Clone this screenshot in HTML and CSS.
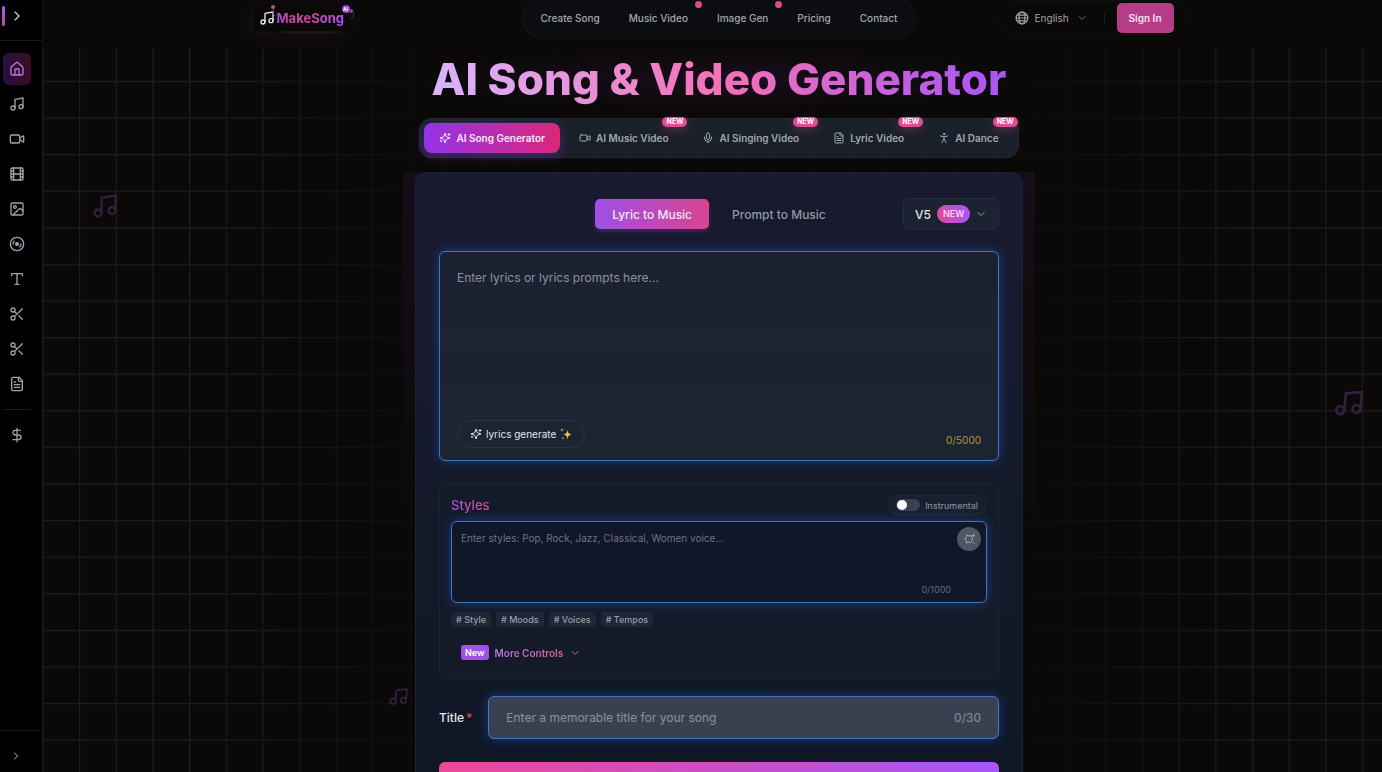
FILE: index.html
```html
<!DOCTYPE html>
<html lang="en">
<head>
<meta charset="utf-8">
<meta name="viewport" content="width=device-width, initial-scale=1">
<title>MakeSong AI - AI Song &amp; Video Generator</title>
<link rel="stylesheet" href="styles.css">
</head>
<body>

<!-- icon set -->
<svg class="sprite" aria-hidden="true">
  <symbol id="i-right" viewBox="0 0 24 24"><path d="m9 18 6-6-6-6"/></symbol>
  <symbol id="i-down" viewBox="0 0 24 24"><path d="m6 9 6 6 6-6"/></symbol>
  <symbol id="i-home" viewBox="0 0 24 24"><path d="M15 21v-8a1 1 0 0 0-1-1h-4a1 1 0 0 0-1 1v8"/><path d="M3 10a2 2 0 0 1 .7-1.5l7-6a2 2 0 0 1 2.6 0l7 6A2 2 0 0 1 21 10v9a2 2 0 0 1-2 2H5a2 2 0 0 1-2-2z"/></symbol>
  <symbol id="i-music" viewBox="0 0 24 24"><path d="M9 18V5l12-2v13"/><circle cx="6" cy="18" r="3"/><circle cx="18" cy="16" r="3"/></symbol>
  <symbol id="i-video" viewBox="0 0 24 24"><path d="m16 13 5.2 3.5a.5.5 0 0 0 .8-.4V7.900a.5.5 0 0 0-.8-.4L16 10.500"/><rect x="2" y="6" width="14" height="12" rx="2"/></symbol>
  <symbol id="i-film" viewBox="0 0 24 24"><rect x="3" y="3" width="18" height="18" rx="2"/><path d="M7 3v18M3 7.500h4M3 12h18M3 16.500h4M17 3v18M17 7.500h4M17 16.500h4"/></symbol>
  <symbol id="i-image" viewBox="0 0 24 24"><rect x="3" y="3" width="18" height="18" rx="2"/><circle cx="9" cy="9" r="2"/><path d="m21 15-3.100-3.100a2 2 0 0 0-2.800 0L6 21"/></symbol>
  <symbol id="i-disc" viewBox="0 0 24 24"><circle cx="12" cy="12" r="10"/><circle cx="12" cy="12" r="2" fill="currentColor"/><path d="M6 12c0-1.700.7-3.200 1.800-4.200M18 12c0 1.700-.7 3.200-1.800 4.200"/></symbol>
  <symbol id="i-type" viewBox="0 0 24 24"><path d="M4 7V4h16v3M9 20h6M12 4v16"/></symbol>
  <symbol id="i-cut" viewBox="0 0 24 24"><circle cx="6" cy="6" r="3"/><path d="M8.100 8.100 12 12M20 4 8.100 15.900M14.800 14.800 20 20"/><circle cx="6" cy="18" r="3"/></symbol>
  <symbol id="i-file" viewBox="0 0 24 24"><path d="M15 2H6a2 2 0 0 0-2 2v16a2 2 0 0 0 2 2h12a2 2 0 0 0 2-2V7z"/><path d="M14 2v4a2 2 0 0 0 2 2h4M8 9h2M8 13h8M8 17h8"/></symbol>
  <symbol id="i-dollar" viewBox="0 0 24 24"><path d="M12 2v20M17 5H9.500a3.500 3.500 0 0 0 0 7h5a3.500 3.500 0 0 1 0 7H6"/></symbol>
  <symbol id="i-globe" viewBox="0 0 24 24"><circle cx="12" cy="12" r="10"/><ellipse cx="12" cy="12" rx="5" ry="10"/><path d="M2 12h20M4 7h16M4 17h16"/></symbol>
  <symbol id="i-spark" viewBox="0 0 24 24"><path d="M9.937 15.500A2 2 0 0 0 8.500 14.063l-6.135-1.582a.5.5 0 0 1 0-.962L8.500 9.936A2 2 0 0 0 9.937 8.500l1.582-6.135a.5.5 0 0 1 .963 0L14.063 8.500A2 2 0 0 0 15.500 9.937l6.135 1.581a.5.5 0 0 1 0 .964L15.500 14.063a2 2 0 0 0-1.437 1.437l-1.582 6.135a.5.5 0 0 1-.963 0z"/><path d="M20 3v4M22 5h-4M4 17v2M5 18H3"/></symbol>
  <symbol id="i-mic" viewBox="0 0 24 24"><rect x="9" y="2" width="6" height="13" rx="3"/><path d="M19 10v2a7 7 0 0 1-14 0v-2M12 19v3"/></symbol>
  <symbol id="i-dance" viewBox="0 0 24 24"><circle cx="12" cy="4" r="1.500"/><path d="M5 8c4 1.500 10 1.500 14 0M12 9v5M8 21l4-7 4 7"/></symbol>
  <symbol id="i-wand" viewBox="0 0 24 24"><path d="M16 5l-4 1-5-2v5l-4 3 4 3v5l5-2 3 1M16 5l1 4 3 3-3 2M17 16l5 5M21 3v4M19 5h4"/></symbol>
</svg>

<div class="app">

  <aside class="sidebar">
    <div class="side-top">
      <span class="side-mark"></span>
      <button class="side-btn" aria-label="Expand"><svg class="icon s16"><use href="#i-right"/></svg></button>
    </div>
    <nav class="side-nav" aria-label="Tools">
      <a class="side-link active" href="#home" aria-label="Home"><svg class="icon s16"><use href="#i-home"/></svg></a>
      <a class="side-link" href="#music" aria-label="Music"><svg class="icon s16"><use href="#i-music"/></svg></a>
      <a class="side-link" href="#video" aria-label="Video"><svg class="icon s16"><use href="#i-video"/></svg></a>
      <a class="side-link" href="#film" aria-label="Film"><svg class="icon s16"><use href="#i-film"/></svg></a>
      <a class="side-link" href="#image" aria-label="Image"><svg class="icon s16"><use href="#i-image"/></svg></a>
      <a class="side-link" href="#cover" aria-label="Cover"><svg class="icon s16"><use href="#i-disc"/></svg></a>
      <a class="side-link" href="#text" aria-label="Text"><svg class="icon s16"><use href="#i-type"/></svg></a>
      <a class="side-link" href="#split" aria-label="Splitter"><svg class="icon s16"><use href="#i-cut"/></svg></a>
      <a class="side-link" href="#trim" aria-label="Trimmer"><svg class="icon s16"><use href="#i-cut"/></svg></a>
      <a class="side-link" href="#lyrics" aria-label="Lyrics"><svg class="icon s16"><use href="#i-file"/></svg></a>
      <hr class="side-rule">
      <a class="side-link" href="#pricing" aria-label="Pricing"><svg class="icon s16"><use href="#i-dollar"/></svg></a>
    </nav>
    <div class="side-bottom">
      <button class="side-btn" aria-label="More"><svg class="icon s12"><use href="#i-right"/></svg></button>
    </div>
  </aside>

  <div class="page">
    <!-- background grid and floating notes -->
    <svg class="grid-bg" aria-hidden="true">
      <defs>
        <pattern id="grid" x="-.6" y="7.600" width="36.650" height="36.600" patternUnits="userSpaceOnUse">
          <path d="M0 .5H36.650M.5 0V36.600" stroke="#1d1d1c" stroke-width="1.500" fill="none"/>
        </pattern>
      </defs>
      <rect width="100%" height="100%" fill="url(#grid)"/>
    </svg>
    <svg class="icon note note-a" aria-hidden="true"><use href="#i-music"/></svg>
    <svg class="icon note note-b" aria-hidden="true"><use href="#i-music"/></svg>
    <svg class="icon note note-c" aria-hidden="true"><use href="#i-music"/></svg>

    <header class="header">
      <div class="header-in">
        <a class="logo" href="#top">
          <svg class="icon s16"><use href="#i-music"/></svg>
          <span class="logo-text">MakeSong</span>
          <span class="logo-ai">AI</span>
          <svg class="logo-art" viewBox="0 0 102 32" aria-hidden="true">
            <path d="M21 4c2 4-2 6 2 9" stroke="#8d4b70" fill="none"/>
            <circle cx="21" cy="4" r="2" fill="#b55b7b"/>
            <path d="M99 8c4 1 3 5 0 8" stroke="#4a3868" fill="none"/>
            <circle cx="99" cy="8" r="2" fill="#6f4c99"/>
            <path d="M30 29h52" stroke="#3d1a30"/>
          </svg>
        </a>
        <nav class="menu" aria-label="Main">
          <a href="#create">Create Song</a>
          <a class="dot" href="#mv">Music Video</a>
          <a class="dot" href="#gen">Image Gen</a>
          <a href="#price">Pricing</a>
          <a href="#contact">Contact</a>
        </nav>
        <div class="account">
          <div class="lang">
            <svg class="icon s14"><use href="#i-globe"/></svg>
            <select class="lang-select" aria-label="Language"><option>English</option></select>
            <svg class="icon s12 arrow"><use href="#i-down"/></svg>
          </div>
          <span class="bar"></span>
          <button class="signin">Sign In</button>
        </div>
      </div>
    </header>

    <main class="main">
      <h1 class="title"><span>AI Song &amp; Video Generator</span></h1>

      <div class="tabs">
        <button class="tab active"><svg class="icon s12"><use href="#i-spark"/></svg>AI Song Generator</button>
        <button class="tab"><svg class="icon s12"><use href="#i-video"/></svg>AI Music Video<span class="new">NEW</span></button>
        <button class="tab"><svg class="icon s12"><use href="#i-mic"/></svg>AI Singing Video<span class="new">NEW</span></button>
        <button class="tab"><svg class="icon s12"><use href="#i-file"/></svg>Lyric Video<span class="new">NEW</span></button>
        <button class="tab"><svg class="icon s12"><use href="#i-dance"/></svg>AI Dance<span class="new">NEW</span></button>
      </div>

      <div class="glow">
      <form class="card">
        <div class="mode-row">
          <div class="modes">
            <button type="button" class="mode active">Lyric to Music</button>
            <button type="button" class="mode">Prompt to Music</button>
          </div>
          <div class="version">
            <select class="version-select" aria-label="Model version"><option>V5</option></select>
            <span class="version-new">NEW</span>
            <svg class="icon s12 arrow"><use href="#i-down"/></svg>
          </div>
        </div>

        <div class="lyrics">
          <textarea class="field lyrics-input" aria-label="Lyrics" placeholder="Enter lyrics or lyrics prompts here..."></textarea>
          <div class="lyrics-foot">
            <button type="button" class="generate">
              <svg class="icon s12"><use href="#i-spark"/></svg>
              lyrics generate
              <svg class="stars" viewBox="0 0 12 12" aria-hidden="true"><path d="M7.500 1.500C8 5 8.500 5.800 12 6.500 8.500 7.200 8 8 7.500 11.500 7 8 6.500 7.200 3 6.500 6.500 5.800 7 5 7.500 1.500z" fill="#f6c344"/><path d="M2 0c.2 1.400.6 1.800 2 2-1.400.2-1.800.6-2 2C1.800 2.600 1.400 2.200 0 2 1.400 1.800 1.800 1.400 2 0zM3 8.500c.2 1 .5 1.300 1.500 1.500-1 .2-1.300.5-1.500 1.500-.2-1-.5-1.300-1.500-1.500 1-.2 1.300-.5 1.500-1.500z" fill="#e09a3a"/></svg>
            </button>
            <span class="count gold">0/5000</span>
          </div>
        </div>

        <section class="styles">
          <div class="styles-head">
            <label class="styles-label" for="styles">Styles</label>
            <label class="instrumental"><input type="checkbox" class="switch">Instrumental</label>
          </div>
          <div class="styles-box">
            <textarea class="field styles-input" id="styles" placeholder="Enter styles: Pop, Rock, Jazz, Classical, Women voice..."></textarea>
            <button type="button" class="magic" aria-label="Random styles"><svg class="icon s12"><use href="#i-wand"/></svg></button>
            <span class="count small">0/1000</span>
          </div>
          <div class="tags">
            <button type="button" class="tag"># Style</button>
            <button type="button" class="tag"># Moods</button>
            <button type="button" class="tag"># Voices</button>
            <button type="button" class="tag"># Tempos</button>
          </div>
          <button type="button" class="more">
            <span class="more-new">New</span>
            <span class="more-text">More Controls</span>
            <svg class="icon s12"><use href="#i-down"/></svg>
          </button>
        </section>

        <div class="title-row">
          <label class="title-label" for="song-title">Title<span class="req">*</span></label>
          <div class="title-box">
            <input class="field title-input" id="song-title" type="text" placeholder="Enter a memorable title for your song">
            <span class="count title-count">0/30</span>
          </div>
        </div>

        <button type="submit" class="submit" aria-label="Create"></button>
      </form>
      </div>
    </main>
  </div>
</div>

</body>
</html>
```
FILE: styles.css
```css
* {
  box-sizing: border-box;
}

body {
  margin: 0;
  background: #0a0908;
  color: #e5e7eb;
  font-family: Inter, "Liberation Sans", sans-serif;
  font-size: 12px;
}

button, input, select, textarea {
  font-family: inherit;
  color: inherit;
  margin: 0;
}

button {
  border: 0;
  padding: 0;
  background: none;
  cursor: pointer;
}

a {
  color: inherit;
  text-decoration: none;
}

.sprite {
  position: absolute;
  width: 0;
  height: 0;
}

.icon {
  fill: none;
  stroke: currentColor;
  stroke-width: 2;
  stroke-linecap: round;
  stroke-linejoin: round;
  flex: none;
}
.s12 { width: 12px; height: 12px; }
.s14 { width: 14px; height: 14px; }
.s16 { width: 16px; height: 16px; }

.app {
  display: flex;
  height: 100vh;
  overflow: hidden;
}

/* sidebar */
.sidebar {
  display: flex;
  flex-direction: column;
  width: 43px;
  flex: none;
  background: #000;
  border-right: 1px solid #15171d;
  color: #9ca3af;
}

.side-top {
  display: flex;
  align-items: center;
  gap: 4px;
  height: 41px;
  padding: 0 2px 9px;
  border-bottom: 1px solid #15171d;
}

.side-mark {
  width: 3px;
  height: 20px;
  border-radius: 2px;
  background: linear-gradient(#a855f7, #b04cae);
}

.side-btn {
  display: flex;
  color: #c3c5ca;
}

.side-nav {
  display: flex;
  flex-direction: column;
  gap: 3px;
  padding: 12px 12px 0 3px;
  flex: 1;
}

.side-link {
  display: flex;
  align-items: center;
  justify-content: center;
  width: 28px;
  height: 32px;
  border-radius: 6px;
}
.side-link.active {
  color: #b877d8;
  background: linear-gradient(90deg, #2a0f40, #3a0e25);
}

.side-rule {
  width: 28px;
  margin: 6px 0;
  border: 0;
  border-top: 1px solid #1b1d22;
}

.side-bottom {
  height: 42px;
  display: flex;
  align-items: center;
  padding: 8px 0 0 10px;
  border-top: 1px solid #15171d;
}

/* page and its backdrop */
.page {
  position: relative;
  flex: 1;
  min-width: 0;
  overflow: hidden;
}

.grid-bg {
  position: absolute;
  inset: 0;
  width: 100%;
  height: 100%;
  -webkit-mask-image: linear-gradient(90deg, #000 15%, rgba(0,0,0,.2) 28%, rgba(0,0,0,.1) 50%, rgba(0,0,0,.2) 74%, #000 90%);
  mask-image: linear-gradient(90deg, #000 15%, rgba(0,0,0,.2) 28%, rgba(0,0,0,.1) 50%, rgba(0,0,0,.2) 74%, #000 90%);
}

.note {
  position: absolute;
  color: #31203b;
}
.note-a { left: 48px; top: 192px; width: 28px; height: 28px; }
.note-b { left: 345px; top: 686px; width: 21px; height: 21px; transform: rotate(4deg); }
.note-c { right: 17px; top: 387px; width: 32px; height: 32px; transform: rotate(5deg); }

/* header */
.header {
  position: relative;
  z-index: 2;
  height: 48px;
  padding: 0 0 12px 13px;
  background: #0a0908;
}

.header-in {
  display: grid;
  grid-template-columns: 1fr auto 1fr;
  grid-template-rows: 100%;
  align-items: center;
  height: 100%;
  max-width: 935px;
  margin: 0 auto;
}

.logo {
  position: relative;
  display: flex;
  align-items: center;
  justify-self: start;
  gap: 2px;
  width: 102px;
  height: 30px;
  padding-left: 6px;
  border: 1px solid #130e12;
  border-radius: 6px;
  box-shadow: -4px 4px 18px rgba(168,85,247,.08);
  color: #e8e8e8;
}

.logo-text {
  font-size: 13px;
  font-weight: 700;
  background: linear-gradient(90deg, #b04cc8, #d6479b 50%, #a855f7);
  -webkit-background-clip: text;
  background-clip: text;
  color: transparent;
}

.logo-ai {
  position: absolute;
  right: 3px;
  top: 1px;
  width: 8px;
  height: 8px;
  border-radius: 4px;
  background: #a63fd0;
  color: #fff;
  font-size: 5px;
  font-weight: 700;
  line-height: 8px;
  text-align: center;
}

.logo-art {
  position: absolute;
  inset: -1px 0 0 -1px;
  width: 102px;
  height: 32px;
}

.menu {
  display: flex;
  align-items: center;
  gap: 29px;
  height: 41px;
  padding: 0 18px;
  border: 1px solid #13161b;
  border-radius: 21px;
  background: #0b0d11;
  color: #a3a6ad;
  font-size: 10px;
  font-weight: 500;
}

.dot {
  position: relative;
}
.dot::after {
  content: "";
  position: absolute;
  right: -14px;
  top: -11px;
  width: 7px;
  height: 7px;
  border-radius: 50%;
  background: #dc4a94;
}

.account {
  display: flex;
  align-items: center;
  justify-self: end;
  height: 36px;
  padding: 0 12px 0 15px;
  border: 1px solid #11100f;
  border-radius: 18px;
  color: #a3a3a6;
}

.lang {
  display: flex;
  align-items: center;
}

.lang-select {
  appearance: none;
  width: 57px;
  margin-right: -10px;
  padding: 0 0 0 6px;
  border: 0;
  background: none;
  font-size: 10px;
}

.arrow {
  pointer-events: none;
}
.lang .arrow {
  color: #6b6b70;
}

.bar {
  width: 1px;
  height: 12px;
  margin: 0 12px 0 16px;
  background: #1c1b1b;
}

.signin {
  height: 30px;
  padding: 0 12px;
  border-radius: 5px;
  background: #b63c88;
  color: #fbe3f1;
  font-size: 10px;
  font-weight: 600;
}

/* main column */
.main {
  position: relative;
  display: flex;
  flex-direction: column;
  align-items: center;
  padding-left: 13px;
}

.title {
  margin: 0;
  padding: 0 12px;
  font-size: 44px;
  font-weight: 800;
  line-height: 62px;
  white-space: nowrap;
  background: radial-gradient(closest-side, #1a0d1c, rgba(26,13,28,0));
}
.title span {
  background: linear-gradient(90deg, #d8b4fe, #f472b6 50%, #a855f7);
  -webkit-background-clip: text;
  background-clip: text;
  color: transparent;
}

.tabs {
  display: flex;
  gap: 4px;
  margin-top: 8px;
  padding: 4px;
  border: 1px solid #222831;
  border-radius: 12px;
  background: #1a2029;
}

.tab {
  position: relative;
  display: flex;
  align-items: center;
  gap: 5px;
  height: 30px;
  padding: 0 15px;
  border-radius: 8px;
  color: #a0a6b0;
  font-size: 10px;
  font-weight: 600;
  white-space: nowrap;
}
.tab.active {
  background: linear-gradient(90deg, #9333ea, #db2777);
  box-shadow: 0 3px 12px rgba(147,51,234,.4);
  color: #fbe9fb;
}

.new {
  position: absolute;
  right: -4px;
  top: -6px;
  width: 25px;
  height: 10px;
  border-radius: 5px;
  background: #e04c96;
  box-shadow: 0 3px 8px rgba(236,72,153,.3);
  color: #fff;
  font-size: 7px;
  font-weight: 700;
  line-height: 10px;
  text-align: center;
}

.glow {
  width: 100%;
  max-width: 632px;
  margin-top: 14px;
  padding: 0 12px;
  background: linear-gradient(#150d18, rgba(21,13,24,0) 360px);
}

.card {
  padding: 24px 23px 0;
  border: 1px solid #1b2034;
  border-bottom: 0;
  border-radius: 12px 12px 0 0;
  background: linear-gradient(#1a1a30, #141a2b 40%, #0f1725);
}

.mode-row {
  display: grid;
  grid-template-columns: 1fr auto 1fr;
  align-items: center;
}

.modes {
  grid-column: 2;
  display: flex;
  gap: 6px;
  padding: 2px;
  border-radius: 6px;
  background: #161a2c;
}

.mode {
  height: 30px;
  padding: 0 17px;
  border-radius: 5px;
  color: #9299a6;
  font-size: 12px;
  font-weight: 500;
}
.mode.active {
  background: linear-gradient(90deg, #9f50e6, #d8448f);
  box-shadow: 0 2px 5px rgba(168,85,247,.3);
  color: #f8e6f8;
}

.version {
  position: relative;
  display: flex;
  align-items: center;
  gap: 5px;
  justify-self: end;
  width: 96px;
  height: 32px;
  padding-left: 33px;
  border: 1px solid #282d3a;
  border-radius: 6px;
  background: #1b2232;
}

.version-select {
  appearance: none;
  position: absolute;
  inset: 0;
  width: 100%;
  padding: 0 11px;
  border: 0;
  background: none;
  font-size: 12px;
  font-weight: 500;
}

.version-new {
  position: relative;
  padding: 0 6px;
  border-radius: 9px;
  background: linear-gradient(90deg, #e04a9a, #a855f7);
  color: #fbe3f8;
  font-size: 9px;
  font-weight: 500;
  line-height: 18px;
  pointer-events: none;
}

.version .arrow {
  position: relative;
  color: #9ca3af;
}

/* text fields share the blue outline */
.field {
  display: block;
  width: 100%;
  border: 1px solid #4478b8;
  border-radius: 6px;
  outline: 0;
  resize: none;
  box-shadow: 0 0 12px rgba(37,99,235,.45);
}
.field::placeholder {
  color: #8b919e;
  opacity: 1;
}

.lyrics {
  position: relative;
  margin-top: 20px;
}

.lyrics-input {
  height: 210px;
  padding: 16px 17px;
  background: linear-gradient(#1c2132, #1b2531);
  font-size: 12px;
  line-height: 20px;
}

.lyrics-foot {
  position: absolute;
  left: 18px;
  right: 18px;
  bottom: 13px;
  display: flex;
  justify-content: space-between;
  align-items: flex-end;
}

.generate {
  display: flex;
  align-items: center;
  gap: 4px;
  height: 28px;
  padding: 0 12px;
  border: 1px solid #29323e;
  border-radius: 14px;
  color: #e2e5ea;
  font-size: 10px;
}

.stars {
  width: 12px;
  height: 12px;
}

.count {
  color: #868d9a;
}
.gold {
  color: #b8923a;
  font-size: 10px;
  line-height: 16px;
}

.styles {
  margin-top: 22px;
  padding: 11px 11px 18px;
  border: 1px solid #1d2331;
  border-radius: 8px;
  background: #141a28;
}

.styles-head {
  display: flex;
  align-items: center;
  justify-content: space-between;
}

.styles-label {
  background: linear-gradient(90deg, #a855d8, #dc4a94);
  -webkit-background-clip: text;
  background-clip: text;
  color: transparent;
  font-size: 13px;
  font-weight: 500;
}

.instrumental {
  display: flex;
  align-items: center;
  gap: 5px;
  height: 20px;
  padding: 0 8px;
  border: 1px solid #202836;
  border-radius: 10px;
  background: #182030;
  color: #9097a3;
  font-size: 9px;
}

.switch {
  appearance: none;
  width: 24px;
  height: 12px;
  border-radius: 6px;
  background: #374151;
}
.switch::before {
  content: "";
  display: block;
  width: 10px;
  height: 10px;
  margin: 1px;
  border-radius: 5px;
  background: #fff;
}
.switch:checked::before {
  margin-left: 13px;
}

.styles-box {
  position: relative;
  margin-top: 6px;
}

.styles-input {
  height: 82px;
  padding: 8px 9px;
  background: #111728;
  font-size: 10px;
  line-height: 16px;
}
.styles-input::placeholder {
  color: #6c7381;
}

.magic {
  position: absolute;
  right: 6px;
  top: 6px;
  display: flex;
  align-items: center;
  justify-content: center;
  width: 24px;
  height: 24px;
  border-radius: 12px;
  background: #4e5664;
  color: #a0a6b1;
}

.small {
  position: absolute;
  right: 36px;
  bottom: 6px;
  color: #626977;
  font-size: 9px;
  line-height: 14px;
}

.tags {
  display: flex;
  gap: 5px;
  margin-top: 9px;
}

.tag {
  height: 15px;
  padding: 0 5px;
  border-radius: 4px;
  background: #1f2735;
  color: #969daa;
  font-size: 9px;
  font-weight: 500;
}

.more {
  display: flex;
  align-items: center;
  gap: 6px;
  margin: 18px 0 0 10px;
  color: #b567c4;
}

.more-new {
  padding: 0 4px;
  border-radius: 3px;
  background: #a052e8;
  color: #fff;
  font-size: 9px;
  font-weight: 600;
  line-height: 15px;
}

.more-text {
  background: linear-gradient(90deg, #b37be0, #d6609f);
  -webkit-background-clip: text;
  background-clip: text;
  color: transparent;
  font-size: 10px;
  font-weight: 600;
}

.title-row {
  display: flex;
  align-items: center;
  gap: 16px;
  margin-top: 17px;
}

.title-label {
  font-weight: 500;
}

.req {
  margin-left: 2px;
  color: #e04444;
}

.title-box {
  position: relative;
  flex: 1;
}

.title-input {
  height: 43px;
  padding: 0 60px 0 17px;
  background: #394150;
  font-size: 12px;
}

.title-count {
  position: absolute;
  right: 18px;
  top: 14px;
}

.submit {
  display: block;
  width: 100%;
  height: 44px;
  margin-top: 23px;
  border-radius: 6px;
  background: linear-gradient(90deg, #ec4899, #a855f7);
}
```
